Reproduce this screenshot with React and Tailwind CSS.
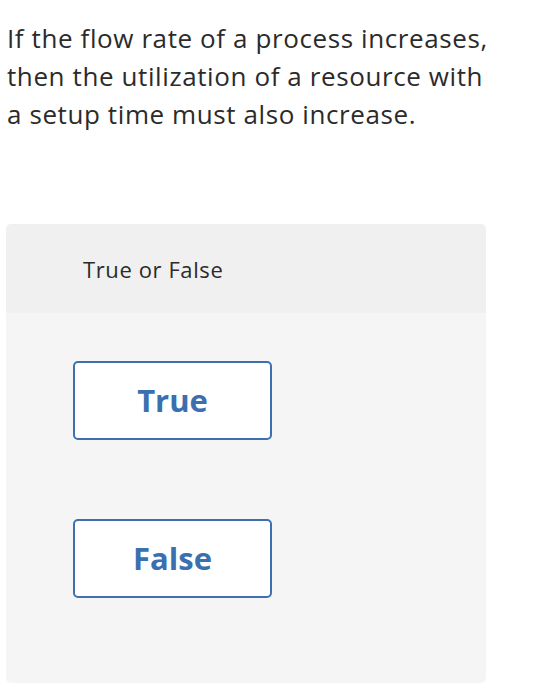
import React from "react";

const options = ["True", "False"];

const App = () => {
  return (
    <div className="min-h-[700px] bg-white font-['Open_Sans','Noto_Sans',sans-serif] text-[#2b2b2b]">
      {/* Question */}
      <p className="pl-[7px] pt-[19px] text-[26px] leading-[38px] tracking-[0.6px]">
        If the flow rate of a process increases,
        <br />
        then the utilization of a resource with
        <br />
        a setup time must also increase.
      </p>

      {/* Answer card */}
      <div className="ml-[6px] mt-[91px] w-[480px] h-[459px] rounded-[5px] bg-[#f5f5f5] overflow-hidden">
        <div className="h-[89px] bg-[#f0f0f0] flex items-center pl-[77px] pt-[2px] text-[22px] tracking-[0.6px]">
          True or False
        </div>
        <div className="flex flex-col gap-[79px] pl-[67px] pt-[48px]">
          {options.map((opt) => (
            <button
              key={opt}
              className="w-[199px] h-[79px] rounded-[5px] border-2 border-solid border-[#3d70b2] bg-white text-[31px] font-bold text-[#3a6fb0]"
            >
              {opt}
            </button>
          ))}
        </div>
      </div>
    </div>
  );
};

export default App;
